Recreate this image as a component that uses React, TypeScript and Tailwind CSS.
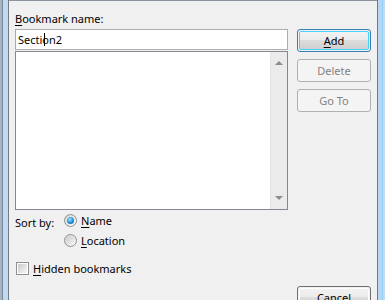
import React from 'react';

const ui = "font-['Noto_Sans',sans-serif] text-[11px] leading-[15px] text-black";

function Key({ children }: { children: React.ReactNode }) {
  return <span className="underline underline-offset-[2px] decoration-[1px]">{children}</span>;
}

function Button({ children, focused, disabled }: { children: React.ReactNode; focused?: boolean; disabled?: boolean }) {
  if (disabled) {
    return (
      <div className="w-[74px] h-[23px] rounded-[3px] border border-[#adb2b5] bg-[#f4f4f4] flex items-center justify-center text-[#838383]">
        {children}
      </div>
    );
  }
  return (
    <div
      className={
        focused
          ? 'w-[74px] h-[23px] rounded-[3px] border border-[#3c7fb1] p-px'
          : 'w-[74px] h-[23px] rounded-[3px] border border-[#707070] p-px'
      }
    >
      <div
        className={
          focused
            ? 'h-full rounded-[2px] border border-[#48d3ff] bg-[linear-gradient(#f2f2f2_0%,#ebebeb_50%,#dddddd_50%,#cfcfcf_100%)] flex items-center justify-center'
            : 'h-full rounded-[2px] border border-[#fcfcfc] bg-[linear-gradient(#f2f2f2_0%,#ebebeb_50%,#dddddd_50%,#cfcfcf_100%)] flex items-center justify-center'
        }
      >
        {children}
      </div>
    </div>
  );
}

function Radio({ checked }: { checked?: boolean }) {
  return (
    <div className="w-[13px] h-[13px] rounded-full border border-[#8e8f8f] bg-[linear-gradient(135deg,#d5d5d5,#fafafa)] flex items-center justify-center">
      {checked ? (
        <div className="w-[7px] h-[7px] rounded-full bg-[radial-gradient(circle_at_40%_35%,#a4e6ff_0%,#2e9be0_45%,#0b4f8a_100%)]" />
      ) : (
        <div className="w-[9px] h-[9px] rounded-full bg-[linear-gradient(135deg,#cbcbcb,#f6f6f6)]" />
      )}
    </div>
  );
}

export default function App() {
  return (
    <div className={`${ui} w-[385px] h-[300px] overflow-hidden flex flex-col bg-[#c4d7ec]`}>
      {/* top of window frame */}
      <div className="h-[6px] bg-[#dbe6f3]" />
      <div className="flex-1 flex">
        {/* left frame */}
        <div className="w-[9px] flex">
          <div className="w-[2px] bg-[#a9b3bf]" />
          <div className="w-px bg-[#76889c]" />
          <div className="w-[5px] bg-[#c3d9f0]" />
          <div className="w-px bg-[#6f7b87]" />
        </div>

        {/* dialog body */}
        <div className="flex-1 bg-[#f0f0f0] border-t border-[#8b949e] flex pl-[6px]">
          <div className="w-[273px] flex flex-col">
            <div className="mt-[10px] h-[15px]">
              <Key>B</Key>ookmark name:
            </div>
            <div className="relative mt-[3px] h-[21px] bg-white border border-[#abadb3] border-l-[#a7a9ae] px-[2px] flex items-center">
              Section2
              <div className="absolute left-[28px] top-[3px] w-px h-[13px] bg-black" />
            </div>
            <div className="mt-px h-[159px] bg-white border border-[#828790] flex justify-end">
              <div className="w-[17px] bg-[#ebebeb] border-l border-[#e3e3e3] flex flex-col justify-between items-center py-[9px]">
                <div className="w-0 h-0 border-x-[4px] border-x-transparent border-b-[4px] border-b-[#8c8c8c]" />
                <div className="w-0 h-0 border-x-[4px] border-x-transparent border-t-[4px] border-t-[#8c8c8c]" />
              </div>
            </div>
            <div className="mt-[3px] flex">
              <div className="w-[49px] pt-[2px]">Sort by:</div>
              <div className="flex flex-col gap-[5px]">
                <div className="flex items-center gap-[4px]">
                  <Radio checked />
                  <span>
                    <Key>N</Key>ame
                  </span>
                </div>
                <div className="flex items-center gap-[4px]">
                  <Radio />
                  <span>
                    <Key>L</Key>ocation
                  </span>
                </div>
              </div>
            </div>
            <div className="mt-[13px] ml-px flex items-center gap-[4px]">
              <div className="w-[13px] h-[13px] border border-[#8e8f8f] p-px bg-white">
                <div className="w-full h-full bg-[linear-gradient(135deg,#cbcbcb,#f6f6f6)]" />
              </div>
              <span>
                <Key>H</Key>idden bookmarks
              </span>
            </div>
          </div>

          <div className="ml-[9px] flex flex-col">
            <div className="mt-[28px]">
              <Button focused>
                <Key>A</Key>dd
              </Button>
            </div>
            <div className="mt-[7px]">
              <Button disabled>Delete</Button>
            </div>
            <div className="mt-[7px]">
              <Button disabled>Go To</Button>
            </div>
            <div className="mt-[174px]">
              <Button>
                <Key>C</Key>ancel
              </Button>
            </div>
          </div>
        </div>

        {/* right frame */}
        <div className="w-[8px] flex">
          <div className="w-px bg-[#6f7b87]" />
          <div className="w-[4px] bg-[#b9d5ef]" />
          <div className="w-px bg-[#8fd0f5]" />
          <div className="w-[2px] bg-[#c3d9f0]" />
        </div>
      </div>
    </div>
  );
}
